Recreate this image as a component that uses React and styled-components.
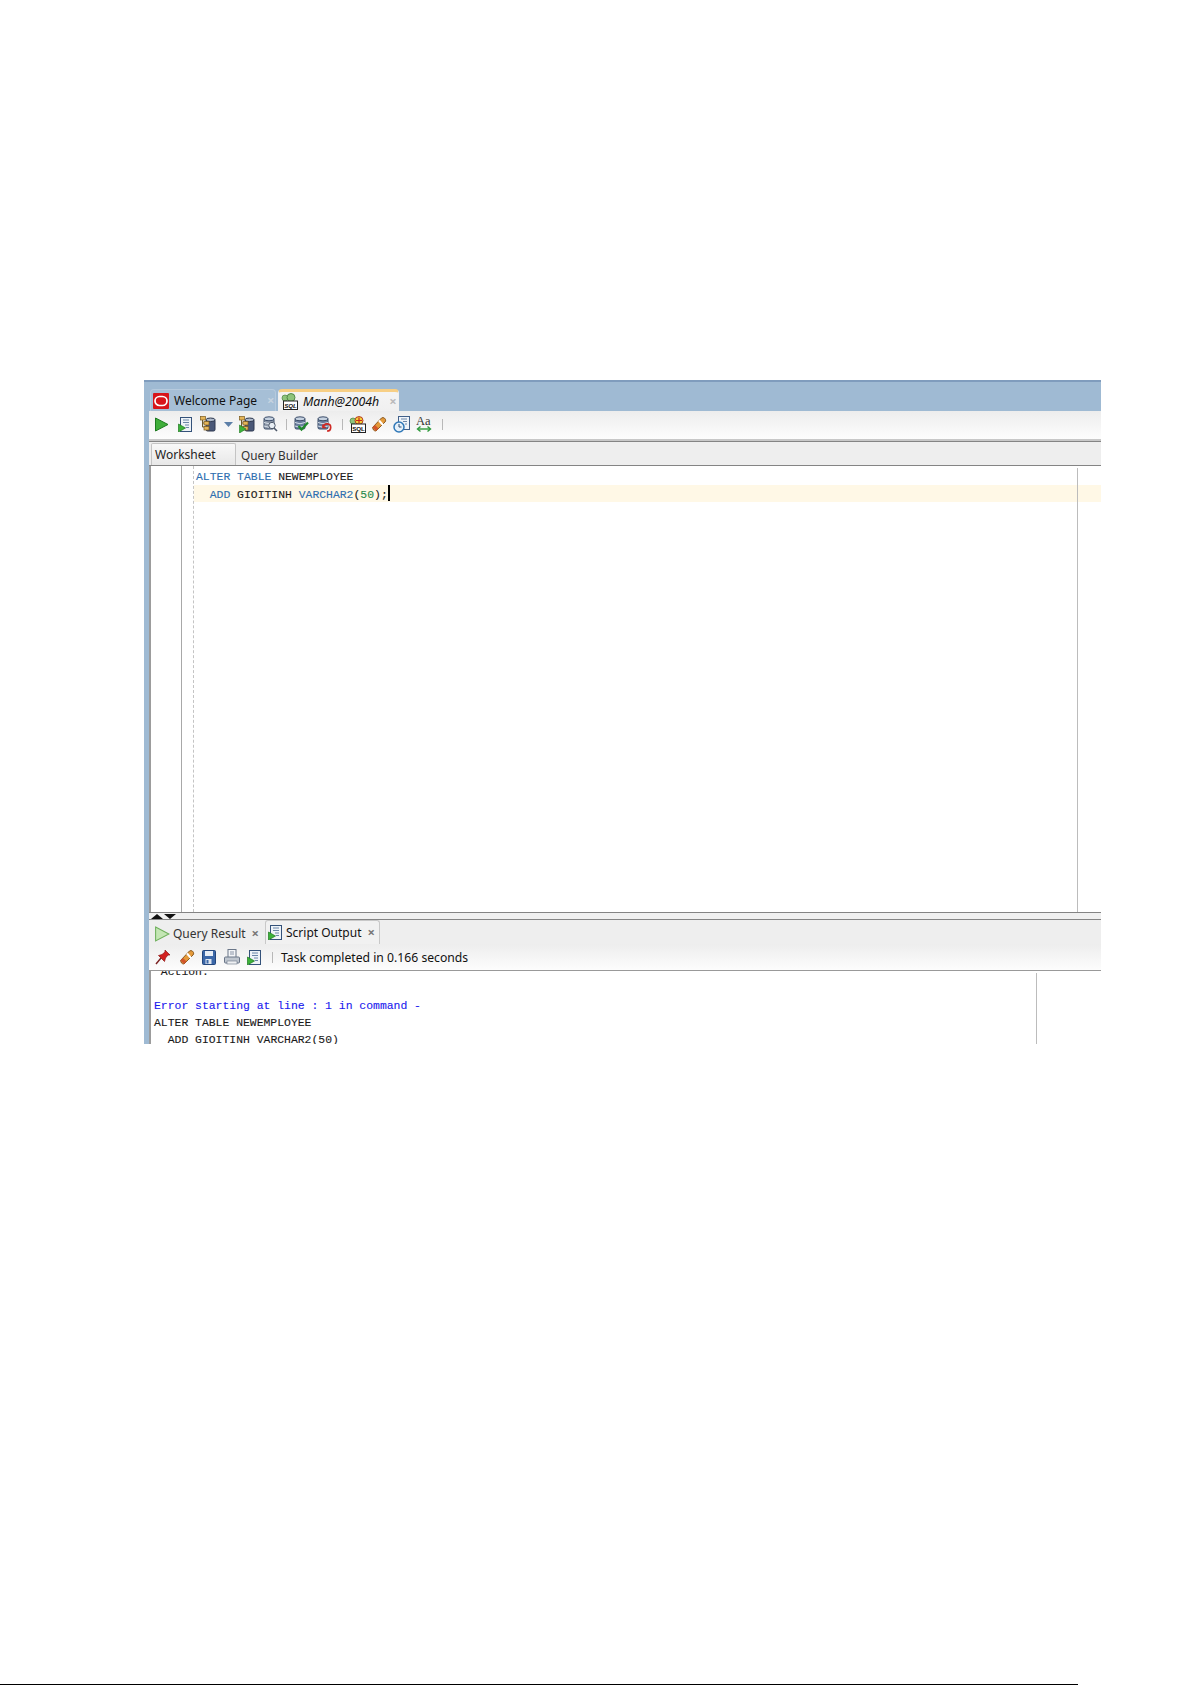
import React from "react";
import styled, { createGlobalStyle } from "styled-components";

const Global = createGlobalStyle`
  html, body { margin: 0; padding: 0; background: #fff; }
  #root { width: 1192px; height: 1685px; overflow: hidden; }
`;

const Page = styled.div`
  width: 1192px; height: 1685px; display: flex; flex-direction: column;
  padding: 380px 0 0 144px; box-sizing: border-box; background: #fff;
`;
const Window = styled.div`
  width: 957px; height: 664px; display: flex; background: #9fbad3;
  border-top: 2px solid #7f9cbd; box-sizing: border-box; overflow: hidden;
`;
const SideEdge = styled.div`width: 5px; flex: none; background: #9fbad3;`;
const Main = styled.div`flex: 1; min-width: 0; display: flex; flex-direction: column; background: #fff;`;

const uiFont = `"Noto Sans", "DejaVu Sans", sans-serif`;
const monoFont = `"Liberation Mono", monospace`;

const DocTabs = styled.div`
  height: 29px; flex: none; background: #9fbad3; display: flex; align-items: flex-end; gap: 2px; padding-left: 1px;
`;
const DocTab = styled.div`
  height: 22px; box-sizing: border-box; white-space: nowrap;
  width: ${p => p.$w}px; display: flex; align-items: center; gap: 5px;
  padding-left: 2px;
  font: ${p => (p.$active ? "italic 12.3px" : "normal 12px")} ${uiFont}; color: #111;
  background: ${p => (p.$active ? "linear-gradient(#f4f4f4, #f0f0f0)" : "#a6bfd6")};
  border-radius: 4px 4px 0 0;
  border: 1px solid ${p => (p.$active ? "#f0f0f0" : "#b6cadd")};
  border-bottom: none;
  border-top: ${p => (p.$active ? "3px solid #f7cf85" : "1px solid #b6cadd")};
`;
const CloseMark = styled.span`
  font: bold 13px ${uiFont}; color: ${p => p.$c || "#c5d3e0"}; margin-left: ${p => p.$ml || 5}px; line-height: 1;
`;
const Toolbar = styled.div`
  height: ${p => p.$h}px; flex: none; display: flex; align-items: center; box-sizing: border-box;
  padding: 0 0 ${p => p.$pb}px 1px;
  background: linear-gradient(#ededed, #fdfdfd);
`;
const Slot = styled.div`
  width: ${p => p.$w}px; flex: none; display: flex; justify-content: center; align-items: center;
`;
const Sep = styled.span`width: 1px; height: 11px; background: #b8b8b8;`;
const Rule = styled.div`flex: none; height: ${p => p.$h || 1}px; background: ${p => p.$c || "#848484"};`;
const SubTabs = styled.div`
  height: 23px; flex: none; display: flex; align-items: flex-end; background: #eeeeee; padding-left: 2px;
`;
const SubTab = styled.div`
  width: 85px; height: 22px; box-sizing: border-box; padding: 0 0 1px 3px; display: flex; align-items: center;
  font: 12px ${uiFont}; color: #222;
  border: 1px solid #c4c4c4; border-bottom: none; border-radius: 2px 2px 0 0;
  background: linear-gradient(#f8f8f8, #e8e8e8);
`;
const SubTabPlain = styled.div`
  height: 21px; margin-left: 5px; display: flex; align-items: center; font: 11.8px ${uiFont}; color: #333;
`;
const Editor = styled.div`
  height: 446px; flex: none; display: flex; background: #fff; position: relative;
`;
const Gutter = styled.div`
  width: 33px; flex: none; box-sizing: border-box; border-left: 2px solid #9c9c9c; border-right: 1px solid #a8a8a8;
`;
const Fold = styled.div`width: 12px; flex: none; border-right: 1px dashed #c4c4c4; box-sizing: border-box;`;
const Code = styled.div`flex: 1; min-width: 0; padding-top: 2px; position: relative;`;
const Line = styled.div`
  height: 17px; font: 11.42px/17px ${monoFont}; white-space: pre; padding-left: 2px;
  color: #1c1c1c; background: ${p => (p.$current ? "#fff8e6" : "transparent")};
  -webkit-text-stroke: 0.1px currentColor;
`;
const Kw = styled.span`color: #2f6fb0;`;
const Num = styled.span`color: #1f8a4c;`;
const Caret = styled.span`
  display: inline-block; width: 2px; height: 16px; background: #000; vertical-align: -3px;
`;
const Margin = styled.div`
  position: absolute; top: 2px; bottom: 0; left: ${p => p.$x}px; width: 1px; background: #bcbcbc;
`;
const SplitHandle = styled.div`
  height: 6px; flex: none; background: #f0f0f0; display: flex; align-items: center; gap: 1px; padding-left: 2px;
`;
const Output = styled.div`
  flex: 1; min-height: 0; position: relative; overflow: hidden; background: #fff; border-left: 2px solid #9c9c9c;
`;
const OutLine = styled.div`
  height: 17px; font: 11.42px/17px ${monoFont}; white-space: pre; padding-left: 3px; color: ${p => p.$c || "#1a1a1a"};
  -webkit-text-stroke: 0.1px currentColor;
  &:first-child { margin-top: -8px; }
`;
const LowerTabs = styled.div`
  height: 24px; flex: none; display: flex; align-items: flex-end; background: #eeeeee; padding-left: 2px;
`;
const LowerTab = styled.div`
  height: ${p => (p.$active ? 24 : 21)}px; box-sizing: border-box; width: ${p => p.$w}px; display: flex; align-items: center; gap: 3px;
  padding-left: 3px; font: 12px ${uiFont}; color: #333; white-space: nowrap;
  ${p => p.$active && "border: 1px solid #c8c8c8; border-bottom: none; border-radius: 3px 3px 0 0; background: #f1f1f1; color:#111; gap: 3px; padding-left: 2px;"}
`;
const Status = styled.span`font: 12.2px ${uiFont}; color: #111; margin-left: 3px; white-space: nowrap;`;
const Footer = styled.div`margin: auto 0 0 -144px; width: 1078px; height: 1px; background: #000; flex: none;`;
const Icon = styled.svg`flex: none; display: block;`;

const Oracle = () => (
  <Icon width="16" height="16" viewBox="0 0 16 16">
    <rect width="16" height="16" rx="1" fill="#d8141a" />
    <rect x="2" y="3.5" width="12" height="9" rx="4.5" fill="none" stroke="#fff" strokeWidth="1.7" />
  </Icon>
);
const Play = ({ s = 15, hollow }) => (
  <Icon width={s} height={s} viewBox="0 0 15 15">
    <path d="M1.5 1 L14 7.5 L1.5 14 Z" fill={hollow ? "#c4e6b4" : "#3fae3a"} stroke={hollow ? "#6fb05c" : "#1d7a1f"} />
  </Icon>
);
const Doc = ({ s = 15 }) => (
  <Icon width={s} height={s} viewBox="0 0 15 15">
    <rect x="2.5" y="0.5" width="11" height="14" fill="#eef3f8" stroke="#34527a" />
    <path d="M5 3h6M5 5.5h6M7 8h4M8 10.5h3" stroke="#6a86a8" />
    <path d="M0.5 7 L7.5 11 L0.5 15 Z" fill="#3db23a" stroke="#1c7a1e" strokeWidth="0.7" />
  </Icon>
);
const Db = ({ c = "#6a7f9e" }) => (
  <>
    <rect x="2" y="2" width="10" height="11" rx="1.5" fill={c} stroke="#3b4c68" />
    <ellipse cx="7" cy="2.8" rx="5" ry="2" fill="#c6d2e0" stroke="#3b4c68" />
    <path d="M2 6.5 q5 2.5 10 0 M2 10 q5 2.5 10 0" stroke="#d8e0ea" fill="none" />
  </>
);
const Tree = ({ play }) => (
  <Icon width="16" height="17" viewBox="0 0 16 17">
    <rect x="6" y="3" width="9" height="12" rx="1.5" fill="#4a5878" stroke="#2e3950" />
    <ellipse cx="10.5" cy="3.8" rx="4.5" ry="1.8" fill="#aebacb" stroke="#2e3950" />
    <path d="M2.5 3v8h3M2.5 7h3" stroke="#6b5a2c" fill="none" />
    <rect x="0.5" y="0.5" width="5" height="3.5" fill="#e5b65a" stroke="#7b5a1c" strokeWidth="0.7" />
    <rect x="4" y="5.5" width="5" height="3.5" fill="#e5b65a" stroke="#7b5a1c" strokeWidth="0.7" />
    <rect x="4" y="10.5" width="5" height="3.5" fill="#e5b65a" stroke="#7b5a1c" strokeWidth="0.7" />
    {play && <path d="M0.5 9 L7 13 L0.5 17 Z" fill="#3db23a" stroke="#1c7a1e" strokeWidth="0.6" />}
  </Icon>
);
const DbSearch = () => (
  <Icon width="16" height="16" viewBox="0 0 16 16">
    <Db c="#8d98a8" />
    <circle cx="10" cy="9.5" r="3.2" fill="#e8eef4" stroke="#4c5768" />
    <path d="M12 12 L15 15" stroke="#4c5768" strokeWidth="1.6" />
  </Icon>
);
const DbCheck = () => (
  <Icon width="16" height="16" viewBox="0 0 16 16">
    <Db />
    <path d="M5.5 10 L8.5 13.5 L15 6.5" fill="none" stroke="#1f8a2a" strokeWidth="2.2" />
  </Icon>
);
const DbUndo = () => (
  <Icon width="16" height="16" viewBox="0 0 16 16">
    <Db />
    <path d="M7.5 11 a3.6 3.6 0 1 1 3.5 4 M7 8.5 v3 h3" fill="none" stroke="#cf2a25" strokeWidth="1.7" />
  </Icon>
);
const SqlBadge = ({ star }) => (
  <Icon width="17" height="17" viewBox="0 0 17 17">
    <circle cx="4" cy="5" r="3" fill="#8ec47c" stroke="#4a8240" strokeWidth="0.7" />
    <circle cx="10" cy="4.5" r="4" fill={star ? "#f3d23a" : "#8ec47c"} stroke={star ? "#b22a1c" : "#4a8240"} strokeWidth="0.9" />
    {star && <path d="M10 1.5v6M7 4.5h6" stroke="#c8261a" strokeWidth="1.2" />}
    <rect x="2.5" y="8" width="14" height="8.5" fill="#fff" stroke="#222" />
    <text x="9.5" y="15" fontSize="6.2" fontWeight="700" textAnchor="middle" fontFamily="Liberation Sans, sans-serif" fill="#111">SQL</text>
  </Icon>
);
const Eraser = () => (
  <Icon width="16" height="16" viewBox="0 0 16 16">
    <path d="M1.5 11.5 L10.5 2 Q12 1 13.5 2.2 L14.5 3.5 Q15 5 14 6 L5 15 Q3.5 15 2.5 14 Z" fill="#e49a3a" stroke="#8a5a22" />
    <path d="M8 4.5 L12 9" stroke="#fff" strokeWidth="2" />
    <path d="M1.5 11.5 L4 9 L7.5 12.5 L5 15 Z" fill="#d2552b" />
  </Icon>
);
const Clock = () => (
  <Icon width="17" height="17" viewBox="0 0 17 17">
    <rect x="5.5" y="0.5" width="11" height="13" fill="#f0f4f9" stroke="#41608a" />
    <path d="M8 3h6M10 5.5h4M12 8h2" stroke="#6a86a8" />
    <circle cx="6" cy="11" r="5" fill="#e5f0fa" stroke="#2f78b8" strokeWidth="1.5" />
    <path d="M6 8v3h2.5" stroke="#2b4a6e" fill="none" />
  </Icon>
);
const Case = () => (
  <Icon width="16" height="18" viewBox="0 0 16 18">
    <text x="0" y="10" fontSize="12.5" fontFamily="Liberation Serif, serif" fill="#333">Aa</text>
    <path d="M2 14h12" stroke="#2d9a3a" strokeWidth="1.4" />
    <path d="M4.5 11.5 L1.5 14 L4.5 16.5 M11.5 11.5 L14.5 14 L11.5 16.5" fill="none" stroke="#2d9a3a" strokeWidth="1.4" />
  </Icon>
);
const Pin = () => (
  <Icon width="16" height="16" viewBox="0 0 16 16">
    <path d="M1 15 L6 9" stroke="#7a2020" strokeWidth="1.4" />
    <path d="M3.5 6.5 L9.5 12.5 L10.5 9 L13 6 L15 6 L10 1 L10 3 L7 5.5 Z" fill="#d3201f" stroke="#8e1514" strokeWidth="0.7" />
  </Icon>
);
const Save = () => (
  <Icon width="14" height="15" viewBox="0 0 14 15">
    <rect x="0.5" y="0.5" width="13" height="14" rx="1" fill="#3b67a8" stroke="#23467c" />
    <rect x="3" y="1" width="8" height="5" fill="#e8eef6" />
    <rect x="3.5" y="9" width="6" height="5" fill="#dfe6ef" />
    <rect x="4.5" y="10" width="2" height="3.5" fill="#3b67a8" />
  </Icon>
);
const Printer = () => (
  <Icon width="16" height="16" viewBox="0 0 16 16">
    <rect x="4" y="0.5" width="8" height="8" fill="#f3f5f8" stroke="#6a7688" />
    <path d="M6 3h4M6 5h4" stroke="#8994a6" />
    <rect x="0.5" y="8" width="15" height="6" rx="1" fill="#bfc6cf" stroke="#6a7688" />
    <rect x="3" y="12" width="10" height="3" fill="#eef0f3" stroke="#6a7688" strokeWidth="0.6" />
  </Icon>
);
const Caret2 = () => (
  <Icon width="9" height="5" viewBox="0 0 9 5"><path d="M0 0h9L4.5 5z" fill="#5c7fa8" /></Icon>
);
const ArrowUp = ({ down }) => (
  <Icon width="12" height="5" viewBox="0 0 12 5">
    <path d={down ? "M0 0h12L6 5z" : "M0 5h12L6 0z"} fill="#111" />
  </Icon>
);

export default function App() {
  return (
    <Page>
      <Global />
      <Window>
        <SideEdge />
        <Main>
          <DocTabs>
            <DocTab $w={126}><Oracle /> Welcome Page <CloseMark>×</CloseMark></DocTab>
            <DocTab $w={121} $active><SqlBadge /> Manh@2004h <CloseMark $c="#bbb">×</CloseMark></DocTab>
          </DocTabs>
          <Toolbar $h={28} $pb={2}>
            <Slot $w={23}><Play /></Slot>
            <Slot $w={25}><Doc /></Slot>
            <Slot $w={20}><Tree /></Slot>
            <Slot $w={20}><Caret2 /></Slot>
            <Slot $w={18}><Tree play /></Slot>
            <Slot $w={27}><DbSearch /></Slot>
            <Slot $w={6}><Sep /></Slot>
            <Slot $w={24}><DbCheck /></Slot>
            <Slot $w={22}><DbUndo /></Slot>
            <Slot $w={14}><Sep /></Slot>
            <Slot $w={17}><SqlBadge star /></Slot>
            <Slot $w={25}><Eraser /></Slot>
            <Slot $w={20}><Clock /></Slot>
            <Slot $w={26}><Case /></Slot>
            <Slot $w={10}><Sep /></Slot>
          </Toolbar>
          <Rule $h={2} $c="#c8c8c8" />
          <Rule />
          <SubTabs>
            <SubTab>Worksheet</SubTab>
            <SubTabPlain>Query Builder</SubTabPlain>
          </SubTabs>
          <Rule />
          <Editor>
            <Gutter />
            <Fold />
            <Code>
              <Line><Kw>ALTER</Kw> <Kw>TABLE</Kw> NEWEMPLOYEE</Line>
              <Line $current>{"  "}<Kw>ADD</Kw> GIOITINH <Kw>VARCHAR2</Kw>(<Num>50</Num>);<Caret /></Line>
              <Margin $x={883} />
            </Code>
          </Editor>
          <Rule />
          <SplitHandle><ArrowUp /><ArrowUp down /></SplitHandle>
          <Rule />
          <LowerTabs>
            <LowerTab $w={114}><Play s={16} hollow /> Query Result <CloseMark $c="#777" $ml={3}>×</CloseMark></LowerTab>
            <LowerTab $w={115} $active><Doc /> Script Output <CloseMark $c="#777" $ml={3}>×</CloseMark></LowerTab>
          </LowerTabs>
          <Toolbar $h={26} $pb={0}>
            <Slot $w={26}><Pin /></Slot>
            <Slot $w={21}><Eraser /></Slot>
            <Slot $w={23}><Save /></Slot>
            <Slot $w={23}><Printer /></Slot>
            <Slot $w={23}><Doc /></Slot>
            <Slot $w={12}><Sep /></Slot>
            <Status>Task completed in 0.166 seconds</Status>
          </Toolbar>
          <Rule $c="#999" />
          <Output>
            <OutLine>*Action:</OutLine>
            <OutLine> </OutLine>
            <OutLine $c="#1a1aee">Error starting at line : 1 in command -</OutLine>
            <OutLine>ALTER TABLE NEWEMPLOYEE</OutLine>
            <OutLine>{"  "}ADD GIOITINH VARCHAR2(50)</OutLine>
            <Margin $x={885} />
          </Output>
        </Main>
      </Window>
      <Footer />
    </Page>
  );
}
